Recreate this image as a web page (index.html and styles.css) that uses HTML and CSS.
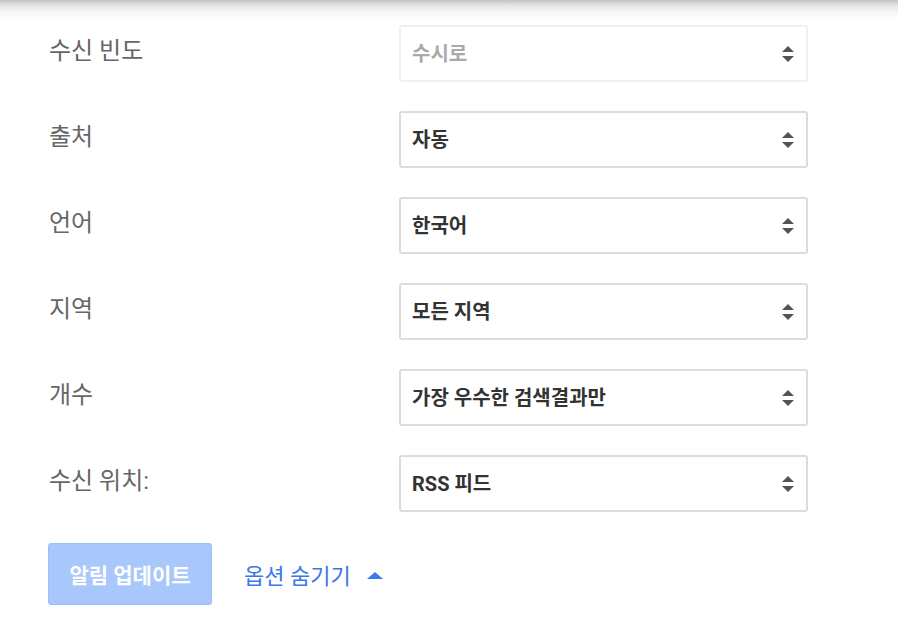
FILE: index.html
```html
<!DOCTYPE html>
<html lang="ko">
<head>
<meta charset="utf-8">
<link rel="stylesheet" href="styles.css">
</head>
<body>
<div class="shade"></div>
<div class="form">
  <div class="row">
    <div class="label">수신 빈도</div>
    <div class="select disabled"><span>수시로</span><span class="arrows"><i class="up"></i><i class="down"></i></span></div>
  </div>
  <div class="row">
    <div class="label">출처</div>
    <div class="select"><span>자동</span><span class="arrows"><i class="up"></i><i class="down"></i></span></div>
  </div>
  <div class="row">
    <div class="label">언어</div>
    <div class="select"><span>한국어</span><span class="arrows"><i class="up"></i><i class="down"></i></span></div>
  </div>
  <div class="row">
    <div class="label">지역</div>
    <div class="select"><span>모든 지역</span><span class="arrows"><i class="up"></i><i class="down"></i></span></div>
  </div>
  <div class="row">
    <div class="label">개수</div>
    <div class="select"><span>가장 우수한 검색결과만</span><span class="arrows"><i class="up"></i><i class="down"></i></span></div>
  </div>
  <div class="row">
    <div class="label">수신 위치:</div>
    <div class="select"><span>RSS 피드</span><span class="arrows"><i class="up"></i><i class="down"></i></span></div>
  </div>
  <div class="footer">
    <div class="button">알림 업데이트</div>
    <div class="link">옵션 숨기기 <i class="caret"></i></div>
  </div>
</div>
</body>
</html>
```
FILE: styles.css
```css
html, body {
  margin: 0;
  padding: 0;
  background: #fff;
  font-family: Roboto, "Noto Sans CJK KR", sans-serif;
}
.shade {
  height: 25px;
  background: linear-gradient(to bottom, #c4c4c4 0px, #e6e6e6 6px, #f7f7f7 12px, #ffffff 22px);
}
.form {
  padding-left: 48px;
}
.row {
  display: flex;
  height: 86px;
}
.label {
  width: 351px;
  padding-left: 1px;
  box-sizing: border-box;
  font-size: 24px;
  line-height: 28px;
  padding-top: 12px;
  color: #666;
}
.select {
  width: 409px;
  height: 57px;
  box-sizing: border-box;
  border: 2px solid #dcdcdc;
  border-radius: 3px;
  display: flex;
  align-items: center;
  justify-content: space-between;
  padding: 0 11px 0 11px;
  font-size: 20px;
  font-weight: bold;
  color: #333;
}
.select > span:first-child {
  margin-top: -2px;
}
.select.disabled {
  border-color: #f0f0f0;
  color: #aaa;
}
.arrows {
  display: flex;
  flex-direction: column;
  gap: 4px;
  margin-right: 1px;
}
.arrows i {
  display: block;
  width: 0;
  height: 0;
  border-left: 6px solid transparent;
  border-right: 6px solid transparent;
}
.arrows .up {
  border-bottom: 6px solid #555;
}
.arrows .down {
  border-top: 6px solid #555;
}
.footer {
  display: flex;
  align-items: center;
  margin-top: 2px;
}
.button {
  width: 164px;
  height: 62px;
  box-sizing: border-box;
  background: #a8c7fa;
  border: 1px solid #9dbff7;
  border-radius: 3px;
  color: #fff;
  font-size: 21px;
  font-weight: bold;
  display: flex;
  align-items: center;
  justify-content: center;
}
.link {
  margin-left: 32px;
  font-size: 22px;
  color: #3b78e7;
  display: flex;
  align-items: center;
}
.caret {
  display: inline-block;
  width: 0;
  height: 0;
  margin-left: 16px;
  margin-top: 2px;
  border-left: 8px solid transparent;
  border-right: 8px solid transparent;
  border-bottom: 7px solid #3b78e7;
}
```
